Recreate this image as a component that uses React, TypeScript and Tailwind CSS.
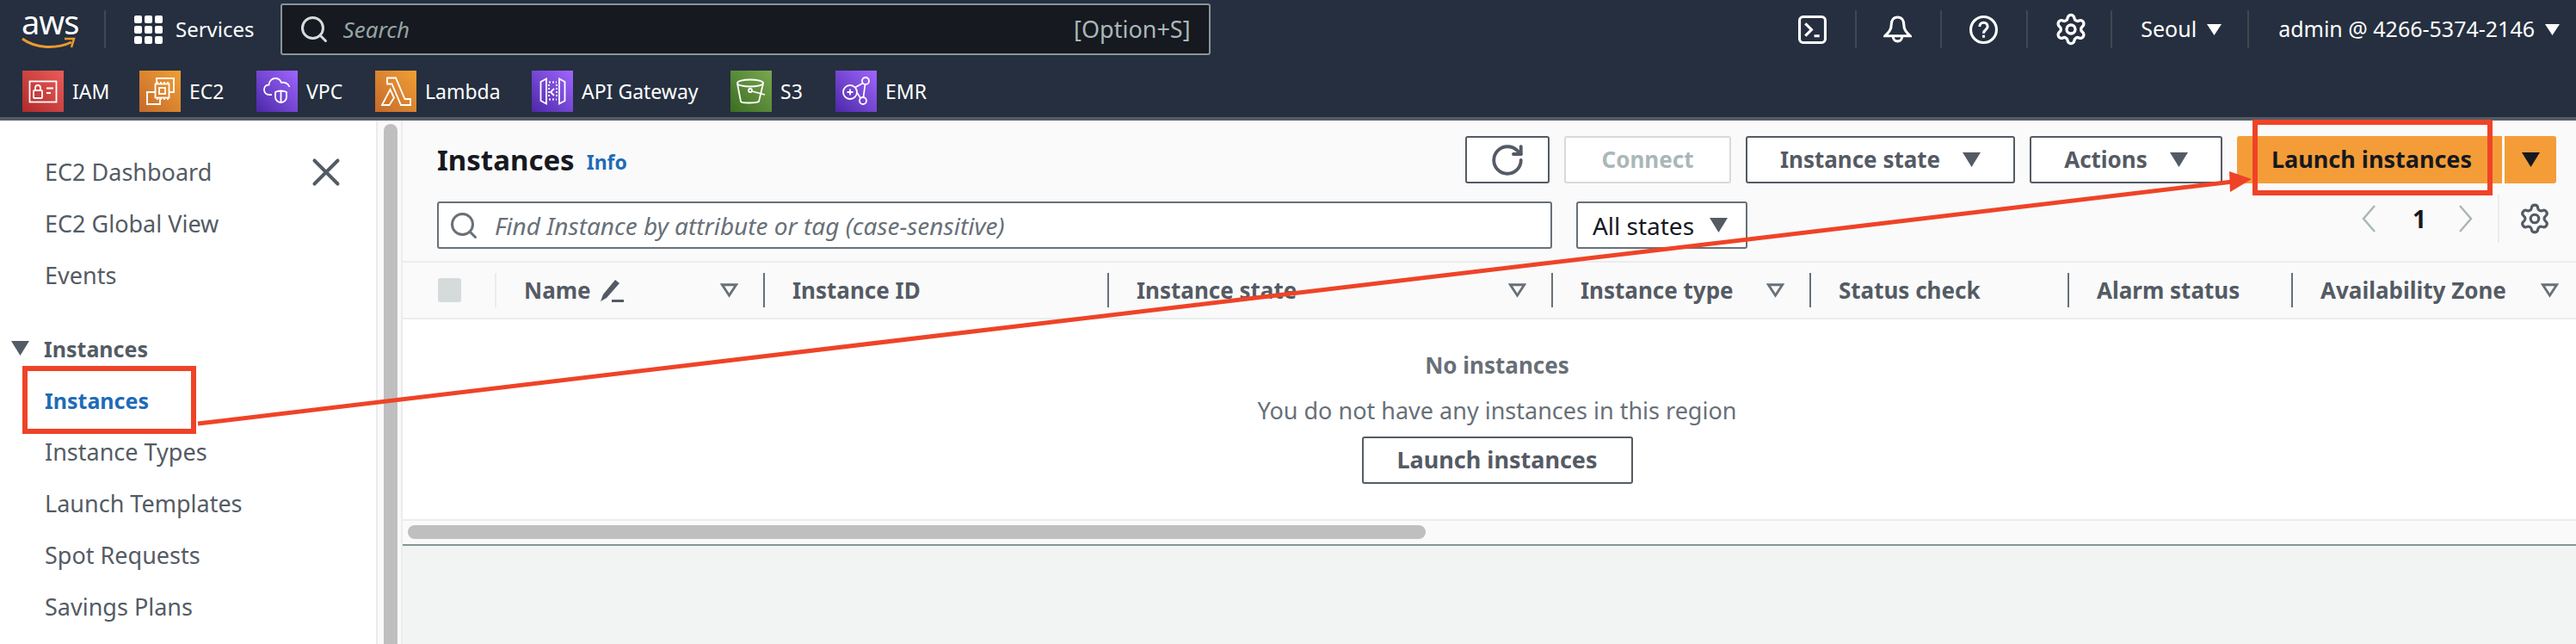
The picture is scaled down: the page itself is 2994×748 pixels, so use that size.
import { ReactNode } from "react";
import { Search, RotateCw, Settings, X } from "lucide-react";

const font = "font-['Noto_Sans',sans-serif]";

type Shortcut = {
  label: string;
  bg: string;
  gap: string;
  icon: ReactNode;
};

const shortcuts: Shortcut[] = [
  {
    label: "IAM",
    bg: "from-[#b02a2a] to-[#ea5b59]",
    gap: "w-[136px]",
    icon: (
      <>
        <rect x="8.500" y="12.500" width="31" height="24" />
        <rect x="13" y="23" width="10" height="9" rx="1" />
        <path d="M15 23v-3a3 3 0 0 1 6 0v3M28 20.500h8M28 26h5" />
      </>
    ),
  },
  {
    label: "EC2",
    bg: "from-[#c56a2a] to-[#f09f35]",
    gap: "w-[136px]",
    icon: (
      <>
        <path d="M20 15V9h20v16h-5M18 25H9v14h15v-7" />
        <rect x="18.500" y="15.500" width="16" height="16" />
        <rect x="23" y="20" width="7" height="7" />
        <path d="M21 13v2M25 13v2M29 13v2M33 13v2M21 32v2M25 32v2M29 32v2M33 32v2" />
      </>
    ),
  },
  {
    label: "VPC",
    bg: "from-[#4d27a8] to-[#a166ff]",
    gap: "w-[138px]",
    icon: (
      <>
        <path d="M18 28h-3c-3.500 0-6-2.500-6-6s2.500-5.500 5.500-5.500C15 12 18 9 22 9c3 0 6 2 7 5 4-1 8 1 9.500 5" />
        <path d="M22 25c3-2 10-2 13 0v6c0 4-4 6-6.500 6S22 35 22 31zM28.500 24v13" />
      </>
    ),
  },
  {
    label: "Lambda",
    bg: "from-[#c56a2a] to-[#f09f35]",
    gap: "w-[182px]",
    icon: (
      <>
        <path d="M14 8.500h10L34.500 33H41v7H30L19.500 15.500H14z" />
        <path d="M8 40l9.500-18 4.500 9.500L16.500 40z" />
      </>
    ),
  },
  {
    label: "API Gateway",
    bg: "from-[#4d27a8] to-[#a166ff]",
    gap: "w-[231px]",
    icon: (
      <>
        <path d="M10.500 13L17 9.500v29L10.500 35zM38.500 13L32 9.500v29L38.500 35z" />
        <path d="M20 13.500h9M20 33.500h9M20 16v16M29 16v16" strokeDasharray="2 2" />
        <path d="M26 21l-4 4 4 4" />
      </>
    ),
  },
  {
    label: "S3",
    bg: "from-[#3b6e22] to-[#7aa84f]",
    gap: "w-[122px]",
    icon: (
      <>
        <ellipse cx="23" cy="14.500" rx="15" ry="4" />
        <path d="M8 15l4 21c1 2 17 2 21 0l5-21" />
        <circle cx="23" cy="23" r="2" />
        <path d="M25 24l15 4" />
      </>
    ),
  },
  {
    label: "EMR",
    bg: "from-[#4d27a8] to-[#a166ff]",
    gap: "w-auto",
    icon: (
      <>
        <circle cx="17" cy="25" r="8" />
        <circle cx="35" cy="12" r="4" />
        <circle cx="32" cy="35" r="4" />
        <path d="M13.500 25h7M17 21.500v7M23 19.500l9-5M25 25.500l4.500 7M34.500 16l-2 15" />
      </>
    ),
  },
];

const sideTop = ["EC2 Dashboard", "EC2 Global View", "Events"];
const sideBottom = ["Instance Types", "Launch Templates", "Spot Requests", "Savings Plans"];

const columns = [
  { label: "Name", width: "w-[312px]", filter: true, edit: true },
  { label: "Instance ID", width: "w-[400px]" },
  { label: "Instance state", width: "w-[516px]", filter: true },
  { label: "Instance type", width: "w-[300px]", filter: true },
  { label: "Status check", width: "w-[300px]" },
  { label: "Alarm status", width: "w-[260px]" },
  { label: "Availability Zone", width: "w-[331px]", filter: true, last: true },
];

function Caret({ className }: { className: string }) {
  return (
    <svg viewBox="0 0 18 18" preserveAspectRatio="none" className={className} fill="currentColor">
      <path d="M0 0h18L9 18z" />
    </svg>
  );
}

function FilterCaret() {
  return (
    <svg viewBox="0 0 22 18" className="h-[18px] w-[21px] text-[#687078]" fill="none" stroke="currentColor" strokeWidth="3">
      <path d="M2.500 2.500h17L11 15.500z" />
    </svg>
  );
}

function NavDivider() {
  return <div className="h-[44px] w-[2px] bg-[#414750]" />;
}

function Button({ children, className }: { children: ReactNode; className: string }) {
  return (
    <button
      type="button"
      className={`flex h-[55px] items-center justify-center rounded-[3px] border-2 bg-white text-[26px] font-bold ${className}`}
    >
      {children}
    </button>
  );
}

export default function App() {
  return (
    <div className={`relative flex h-[748px] w-[2994px] flex-col overflow-hidden bg-white ${font}`}>
      <header className="h-[140px] shrink-0 border-b-4 border-[#545b64] bg-[#252f3f] text-white">
        <div className="flex h-[68px] items-center">
          <div className="relative ml-[25px] h-[48px] w-[63px]">
            <span className="absolute left-0 top-0 text-[38px] leading-[30px] tracking-[-1px]">aws</span>
            <svg viewBox="0 0 63 16" className="absolute left-0 top-[33px] h-[16px] w-[63px]" fill="none">
              <path d="M1 2c16 12 40 12 57 4" stroke="#ec9a2d" strokeWidth="3" />
              <path d="M50 2h11l-3 10" stroke="#ec9a2d" strokeWidth="2.500" />
            </svg>
          </div>
          <div className="ml-[33px] h-[44px] w-[2px] bg-[#414750]" />
          <div className="ml-[33px] grid w-[33px] grid-cols-3 gap-[3px]">
            {Array.from({ length: 9 }).map((_, i) => (
              <span key={i} className="h-[9px] w-[9px] rounded-[2px] bg-white" />
            ))}
          </div>
          <span className="ml-[15px] text-[24px] leading-none">Services</span>
          <div className="ml-[30px] flex h-[60px] w-[1081px] items-center rounded-[3px] border-2 border-[#879596] bg-[#16191f]">
            <Search className="ml-[19px] text-[#d5dbdb]" size={36} strokeWidth={2} />
            <span className="ml-[16px] text-[26px] italic text-[#95a5a6]">Search</span>
            <span className="ml-auto mr-[21px] text-[27px] text-[#aab7b8]">[Option+S]</span>
          </div>
          <div className="ml-auto flex items-center">
            <svg viewBox="0 0 32 32" className="mr-[33px] h-[33px] w-[33px]" fill="none" stroke="white" strokeWidth="3">
              <rect x="1.500" y="1.500" width="29" height="29" rx="4" />
              <path d="M8 9l7 7-7 7M18 23h6" />
            </svg>
            <NavDivider />
            <svg viewBox="0 0 32 32" className="ml-[31px] mr-[33px] h-[33px] w-[33px]" fill="none" stroke="white" strokeWidth="3">
              <path d="M16 2c-5 0-7 4-7 8 0 6-3 9-7 13h28c-4-4-7-7-7-13 0-4-2-8-7-8zM11 24a5 5 0 0 0 10 0" />
            </svg>
            <NavDivider />
            <svg viewBox="0 0 32 32" className="ml-[32px] mr-[33px] h-[33px] w-[33px]" fill="none" stroke="white" strokeWidth="3">
              <circle cx="16" cy="16" r="14.500" />
              <path d="M11.500 12.500c0-6 9-6 9 0 0 3.500-4.500 3.500-4.500 7.500M16 22v3" />
            </svg>
            <NavDivider />
            <Settings className="ml-[30px] mr-[26px]" size={40} strokeWidth={2} />
            <NavDivider />
            <span className="ml-[33px] text-[25px]">Seoul</span>
            <Caret className="ml-[12px] h-[13px] w-[17px]" />
            <div className="ml-[30px]">
              <NavDivider />
            </div>
            <span className="ml-[34px] text-[25px]">admin @ 4266-5374-2146</span>
            <Caret className="ml-[12px] mr-[19px] h-[13px] w-[17px]" />
          </div>
        </div>
        <div className="flex h-[68px] items-center pb-[6px] pl-[26px] pt-[14px]">
          {shortcuts.map((s) => (
            <div key={s.label} className={`flex shrink-0 items-center ${s.gap}`}>
              <div className={`h-[48px] w-[48px] bg-linear-to-tr ${s.bg}`}>
                <svg viewBox="0 0 48 48" className="h-[48px] w-[48px]" fill="none" stroke="white" strokeWidth="1.800">
                  {s.icon}
                </svg>
              </div>
              <span className="ml-[10px] text-[23px] leading-none">{s.label}</span>
            </div>
          ))}
        </div>
      </header>

      <div className="flex min-h-0 flex-1">
        <aside className="relative w-[439px] shrink-0 border-r-2 border-[#eaeded] pl-[52px] pt-[30px] text-[27px] leading-[60px] text-[#545b64]">
          {sideTop.map((item) => (
            <div key={item}>{item}</div>
          ))}
          <div className="relative mt-[25px] text-[25px] font-bold">
            <Caret className="absolute -left-[39px] top-[21px] h-[17px] w-[21px]" />
            <span className="-ml-[1px]">Instances</span>
          </div>
          <div className="text-[25px] font-bold text-[#1e6cb8]">Instances</div>
          {sideBottom.map((item) => (
            <div key={item}>{item}</div>
          ))}
          <X className="absolute left-[352px] top-[33px] text-[#545b64]" size={54} strokeWidth={1.8} />
        </aside>
        <div className="w-[29px] shrink-0 border-r-2 border-[#eaeded] bg-[#fafafa] px-[7px] pt-[4px]">
          <div className="h-full w-[16px] rounded-t-[8px] bg-[#bfbfbf]" />
        </div>

        <main className="flex min-w-0 flex-1 flex-col bg-[#f2f3f3]">
          <div className="bg-[#fafafa]">
            <div className="flex h-[73px] items-start pl-[40px] pr-[23px] pt-[18px]">
              <h1 className="text-[33px] font-bold leading-[55px] text-[#16191f]">Instances</h1>
              <span className="ml-[14px] text-[23px] font-bold leading-[60px] text-[#1e6cb8]">Info</span>
              <div className="ml-auto flex">
                <Button className="w-[98px] border-[#545b64] text-[#545b64]">
                  <RotateCw size={42} strokeWidth={2.2} />
                </Button>
                <Button className="ml-[17px] w-[194px] border-[#d5dbdb] text-[#aab7b8]">Connect</Button>
                <Button className="ml-[17px] w-[313px] border-[#545b64] text-[#545b64]">
                  Instance state
                  <Caret className="ml-[26px] h-[17px] w-[21px]" />
                </Button>
                <Button className="ml-[17px] w-[224px] border-[#545b64] text-[#545b64]">
                  Actions
                  <Caret className="ml-[26px] h-[17px] w-[21px]" />
                </Button>
                <button type="button" className="ml-[17px] h-[55px] w-[308px] rounded-l-[3px] bg-[#f49d38] pl-[5px] text-[27px] font-bold text-[#16191f]">
                  Launch instances
                </button>
                <button type="button" className="ml-[3px] flex h-[55px] w-[60px] items-center justify-center rounded-r-[3px] bg-[#f49d38] text-[#16191f]">
                  <Caret className="h-[17px] w-[21px]" />
                </button>
              </div>
            </div>
            <div className="mt-[21px] flex h-[55px] pl-[40px] pr-[29px]">
              <div className="flex w-[1296px] items-center rounded-[3px] border-2 border-[#687078] bg-white">
                <Search className="ml-[11px] text-[#687078]" size={36} strokeWidth={2} />
                <span className="ml-[18px] text-[28px] italic text-[#687078]">Find Instance by attribute or tag (case-sensitive)</span>
              </div>
              <div className="ml-[28px] flex w-[199px] items-center justify-center rounded-[3px] border-2 border-[#687078] bg-white pr-[4px] text-[28px] text-[#16191f]">
                All states
                <Caret className="ml-[18px] h-[17px] w-[21px] text-[#545b64]" />
              </div>
              <div className="-mt-[8px] ml-auto flex h-[56px] items-center self-start">
                <svg viewBox="0 0 17 32" className="h-[32px] w-[17px]" fill="none" stroke="#aab7b8" strokeWidth="2.500">
                  <path d="M15 1L2 16l13 15" />
                </svg>
                <span className="ml-[42px] w-[10px] text-center text-[28px] font-bold leading-none text-[#16191f]">1</span>
                <svg viewBox="0 0 17 32" className="ml-[43px] h-[32px] w-[17px]" fill="none" stroke="#aab7b8" strokeWidth="2.500">
                  <path d="M2 1l13 15L2 31" />
                </svg>
                <div className="ml-[29px] h-[56px] w-[2px] bg-[#eaeded]" />
                <Settings className="ml-[22px] text-[#545b64]" size={38} strokeWidth={2} />
              </div>
            </div>
            <div className="mt-[14px] flex h-[68px] items-center border-y-2 border-[#eaeded] text-[26px] font-bold text-[#545b64]">
              <div className="flex h-[40px] w-[107px] items-center pl-[41px]">
                <span className="h-[28px] w-[27px] rounded-[3px] bg-[#d5dbdb]" />
              </div>
              {columns.map((col) => (
                <div key={col.label} className={`flex h-[40px] shrink-0 items-center border-l-2 pl-[32px] ${col.width} ${col.label === "Name" ? "border-[#eaeded]" : "border-[#687078]"} ${col.last ? "pr-[20px]" : "pr-[29px]"}`}>
                  <span className="whitespace-nowrap">{col.label}</span>
                  {col.edit && (
                    <svg viewBox="0 0 28 28" className="ml-[10px] h-[28px] w-[28px]" fill="#545b64">
                      <path d="M1 27l3-8L18 2l5 4L8 23zM14 25h14v3H14z" />
                    </svg>
                  )}
                  {col.filter && (
                    <span className="ml-auto flex">
                      <FilterCaret />
                    </span>
                  )}
                </div>
              ))}
            </div>
          </div>
          <div className="flex h-[232px] flex-col items-center bg-white pl-[18px] pt-[35px]">
            <div className="text-[26px] font-bold leading-[36px] text-[#687078]">No instances</div>
            <div className="mt-[17px] text-[27px] leading-[36px] text-[#687078]">You do not have any instances in this region</div>
            <button type="button" className="mt-[12px] h-[55px] w-[315px] rounded-[3px] border-2 border-[#545b64] bg-white text-[27px] font-bold text-[#545b64]">
              Launch instances
            </button>
          </div>
          <div className="h-[31px] border-y-2 border-y-[#eaeded] border-b-[#879596] bg-[#fafafa] px-[6px] pt-[5px]">
            <div className="h-[16px] w-[1183px] rounded-[8px] bg-[#bfbfbf]" />
          </div>
        </main>
      </div>

      {/* annotations drawn on top of the screenshot */}
      <svg viewBox="0 0 2994 748" className="pointer-events-none absolute left-0 top-0 h-[748px] w-[2994px]" fill="none">
        <rect x="29" y="428" width="196" height="73" stroke="#ef4327" strokeWidth="6" />
        <rect x="2621" y="142" width="273" height="82" stroke="#ef4327" strokeWidth="6" />
        <path d="M230 492L2595 211" stroke="#ef4327" strokeWidth="5" />
        <path d="M2617 208l-26-9 1 24z" fill="#ef4327" />
      </svg>
    </div>
  );
}
